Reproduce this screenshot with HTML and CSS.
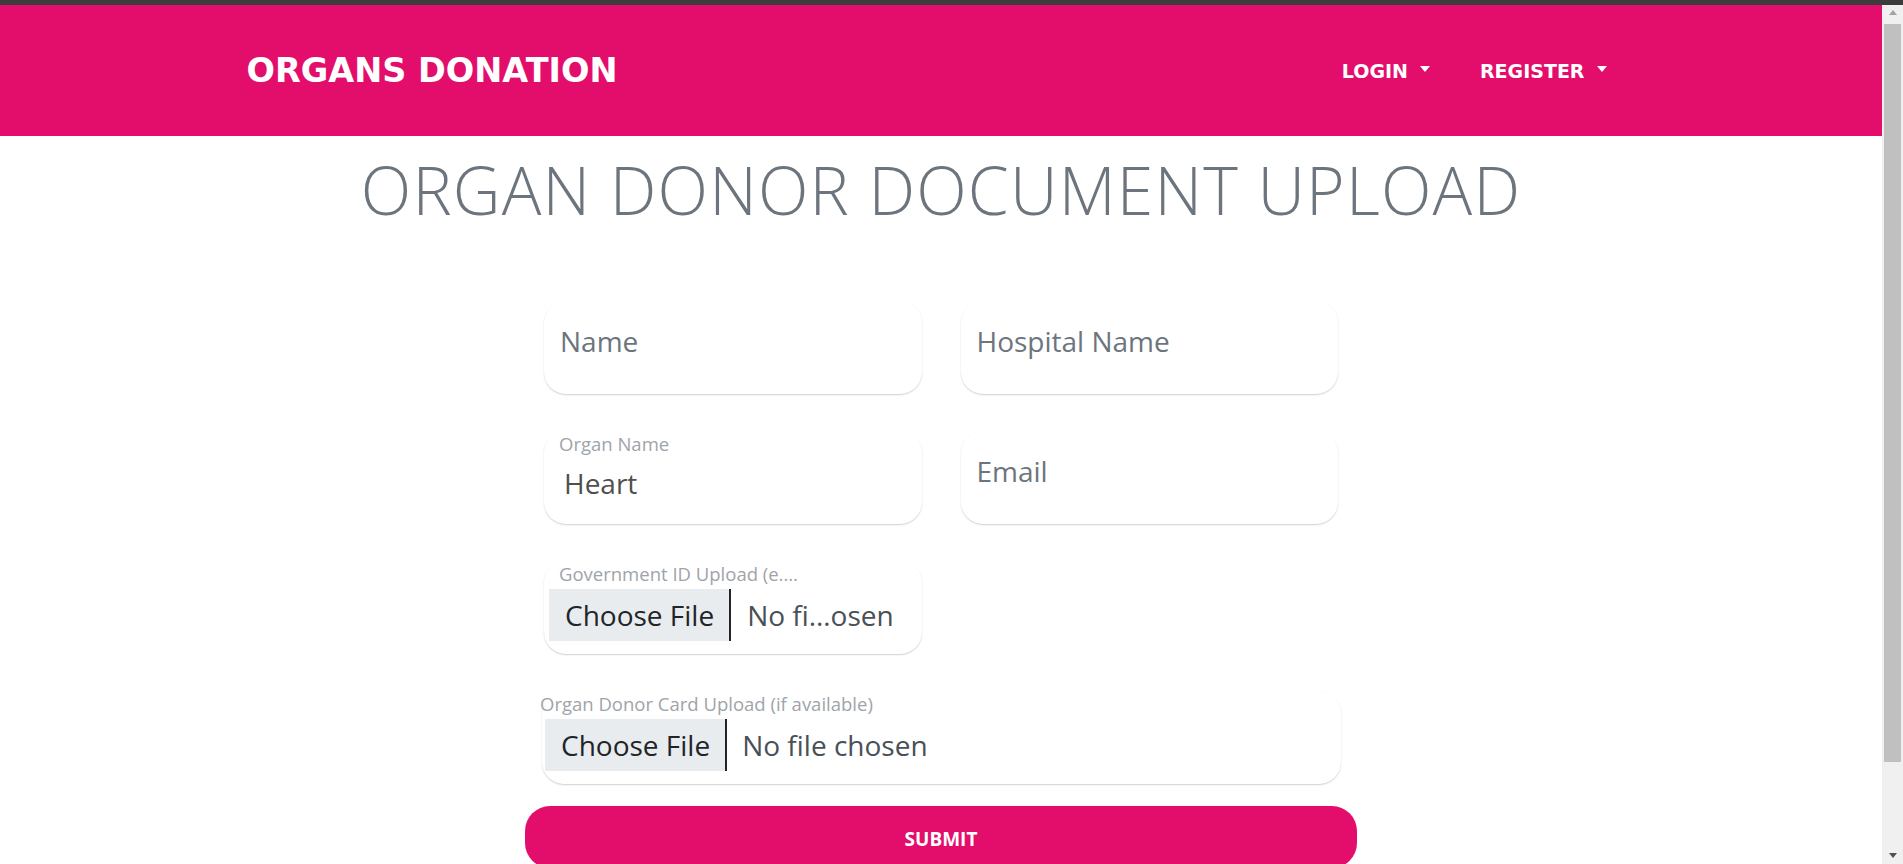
FILE: index.html
```html
<!DOCTYPE html>
<html lang="en">
<head>
<meta charset="utf-8">
<title>Organ Donor Document Upload</title>
<link rel="stylesheet" href="styles.css">
</head>
<body>
<div class="frame-top"></div>
<div class="window">
  <div class="viewport">
    <header class="navbar">
      <div class="navbar-inner">
        <a class="brand" href="#">ORGANS DONATION</a>
        <nav class="nav">
          <a class="nav-link" href="#">LOGIN</a>
          <a class="nav-link" href="#">REGISTER</a>
        </nav>
      </div>
    </header>
    <main class="page">
      <h1 class="title">ORGAN DONOR DOCUMENT UPLOAD</h1>
      <form class="form">
        <div class="grid">
          <div class="field">
            <input class="input input--floating" type="text" placeholder="Name">
          </div>
          <div class="field">
            <input class="input input--floating" type="text" placeholder="Hospital Name">
          </div>
          <div class="field">
            <label class="field-label">Organ Name</label>
            <select class="input select">
              <option>Heart</option>
            </select>
          </div>
          <div class="field">
            <input class="input input--floating" type="email" placeholder="Email">
          </div>
          <div class="field">
            <label class="field-label field-label--clip">Government ID Upload (e.g., Aadhaar, Passport)</label>
            <label class="file">
              <input class="file-input" type="file">
              <span class="file-btn">Choose File</span>
              <span class="file-name">No fi…osen</span>
            </label>
          </div>
          <div class="field-spacer"></div>
          <div class="field field--wide">
            <label class="field-label field-label--flush">Organ Donor Card Upload (if available)</label>
            <label class="file file--wide">
              <input class="file-input" type="file">
              <span class="file-btn">Choose File</span>
              <span class="file-name file-name--wide">No file chosen</span>
            </label>
          </div>
        </div>
        <button class="submit" type="submit">SUBMIT</button>
      </form>
    </main>
  </div>
  <div class="scrollbar" aria-hidden="true">
    <span class="sb-arrow sb-arrow--up"></span>
    <span class="sb-thumb"></span>
    <span class="sb-arrow sb-arrow--down"></span>
  </div>
</div>
</body>
</html>
```
FILE: styles.css
```css
* { box-sizing: border-box; }

html, body { margin: 0; padding: 0; }

body {
  font-family: "Open Sans", "Noto Sans", sans-serif;
  background: #fff;
  color: #212529;
  height: 100vh;
  overflow: hidden;
}

.frame-top { height: 5px; background: #3c3c3c; }

.window {
  display: flex;
  height: calc(100vh - 5px);
  overflow: hidden;
}

.viewport { flex: 1; min-width: 0; overflow: hidden; }

/* decorative browser scrollbar, as in the screenshot */
.scrollbar {
  width: 21px;
  flex: none;
  background: #f0f0f0;
  display: flex;
  flex-direction: column;
  align-items: center;
  padding: 5px 0 6px;
}

.sb-arrow {
  width: 0;
  height: 0;
  border-left: 4.5px solid transparent;
  border-right: 4.5px solid transparent;
}

.sb-arrow--up { border-bottom: 5px solid #a3a3a3; }
.sb-arrow--down { border-top: 5px solid #505050; margin-top: auto; }

.sb-thumb {
  width: 17px;
  height: 738px;
  margin-top: 9px;
  background: #c0c0c0;
}

.navbar {
  background: #e30e6b;
  height: 131px;
  display: flex;
  align-items: center;
}

.navbar-inner {
  width: 1425px;
  margin: 0 auto;
  padding: 0 19px 0 18px;
  display: flex;
  align-items: center;
  justify-content: space-between;
}

.brand {
  font-family: "DejaVu Sans", sans-serif;
  font-weight: 700;
  font-size: 33.5px;
  color: #fff;
  text-decoration: none;
}

.nav { display: flex; gap: 50px; padding-right: 28px; }

.nav-link {
  font-family: "DejaVu Sans", sans-serif;
  font-weight: 700;
  font-size: 19px;
  color: #fff;
  text-decoration: none;
  display: flex;
  align-items: center;
}

.nav-link::after {
  content: "";
  margin-left: 12px;
  margin-top: -3px;
  border-top: 6px solid #fff;
  border-left: 5.5px solid transparent;
  border-right: 5.5px solid transparent;
}

.page { padding-bottom: 100px; }

.title {
  margin: 14px 0 0;
  text-align: center;
  font-weight: 300;
  font-size: 66px;
  letter-spacing: 1.2px;
  line-height: 79px;
  color: #6c757d;
}

.form { width: 832px; margin: 72px auto 0; }

.grid {
  padding: 0 19px;
  display: grid;
  grid-template-columns: 1fr 1fr;
  column-gap: 39px;
  row-gap: 37px;
}

.field {
  height: 93px;
  padding-bottom: 13px;
  border-radius: 22px;
  background: #fff;
  box-shadow: 0 1px 1.5px rgba(40, 45, 70, 0.22);
  display: flex;
  flex-direction: column;
}

.field--wide { grid-column: 1 / -1; margin: 0 -3px 0 -2px; }

.field-label {
  display: block;
  height: 28px;
  line-height: 26px;
  font-size: 18.5px;
  color: #9ea4aa;
  padding-left: 15px;
  white-space: nowrap;
}

.field-label--clip {
  max-width: 258px;
  overflow: hidden;
  text-overflow: ellipsis;
}

.field-label--flush { padding-left: 0; margin-left: -2px; }

.input {
  display: block;
  width: 100%;
  height: 52px;
  border: 0;
  outline: 0;
  background: transparent;
  font-family: inherit;
  font-size: 28px;
  color: #4f4f4f;
  padding: 0 16px;
}

.input--floating { height: 80px; }

.input::placeholder { color: #6c757d; opacity: 1; }

.select {
  appearance: none;
  -webkit-appearance: none;
  padding: 0 0 4px 20px;
}

.file {
  display: flex;
  align-items: center;
  height: 52px;
  margin-left: 5px;
  cursor: pointer;
}

.file--wide { margin-left: 3px; }

.file-input { display: none; }

.file-btn {
  height: 52px;
  display: flex;
  align-items: center;
  padding: 0 15px 0 16px;
  background: #e9ecef;
  border-right: 2px solid #212529;
  font-size: 28px;
  color: #212529;
}

.file-name {
  margin-left: 16px;
  font-size: 28px;
  color: #495057;
}

.file-name--wide { margin-left: 15px; }

.submit {
  display: block;
  width: 100%;
  height: 62px;
  margin-top: 22px;
  padding-top: 4px;
  border: 0;
  border-radius: 25px;
  background: #e30e6b;
  color: #fff;
  font-family: "Open Sans", sans-serif;
  font-weight: 700;
  font-size: 19px;
  cursor: pointer;
}
```
